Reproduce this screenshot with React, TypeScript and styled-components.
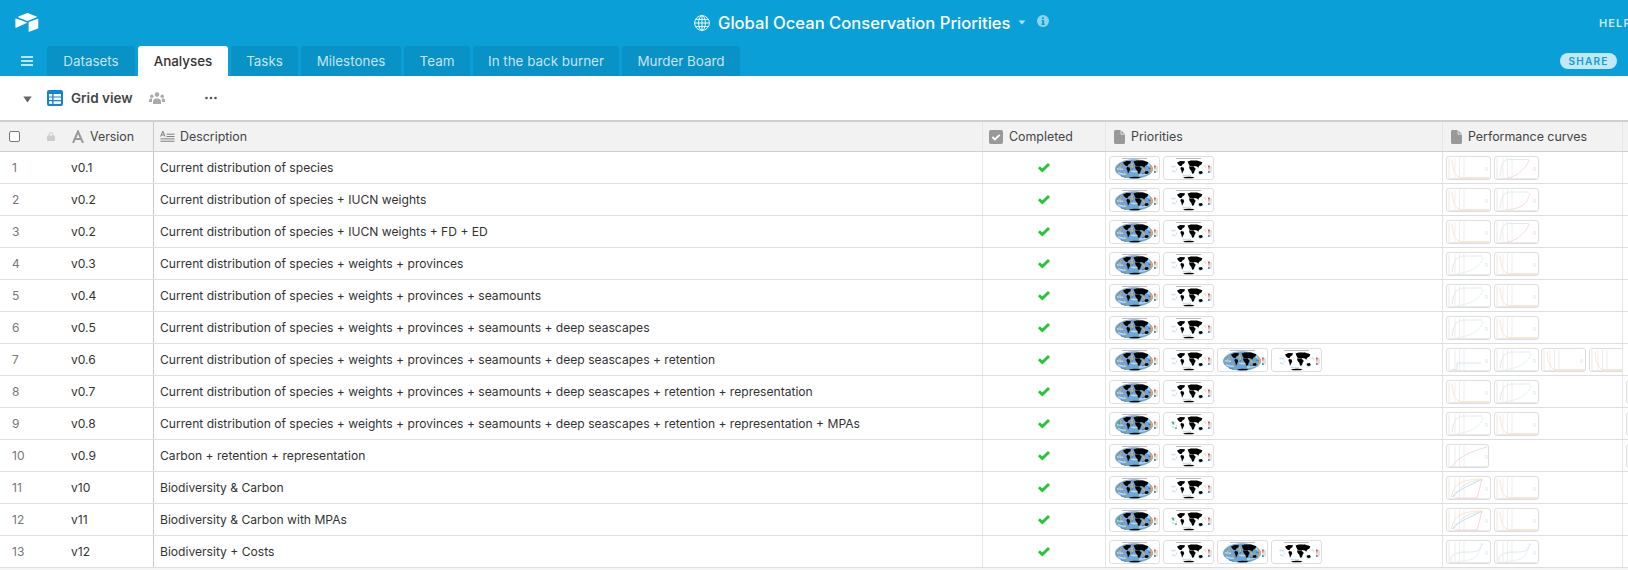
import React from 'react';
import styled, { createGlobalStyle } from 'styled-components';

const GlobalStyle = createGlobalStyle`
  html, body { margin: 0; padding: 0; height: 100%; background: #f5f5f5; }
  #root { height: 100%; }
  * { box-sizing: border-box; }
  body { font-family: Inter, "Liberation Sans", sans-serif; color: #333; }
`;

const Page = styled.div`
  display: flex;
  flex-direction: column;
  width: 1628px;
  height: 570px;
  overflow: hidden;
`;

const Header = styled.header`
  background: #0a9fd6;
  height: 76px;
  flex: none;
`;

const TopBar = styled.div`
  display: grid;
  grid-template-columns: 694px 1fr 29px;
  align-items: center;
  height: 46px;
`;

const Logo = styled.div`
  padding: 0 0 2px 15px;
  display: flex;
`;

const TitleGroup = styled.div`
  display: flex;
  align-items: center;
  margin-top: -1px;
`;

const Title = styled.h1`
  margin: 0 0 0 8px;
  font-size: 16.6px;
  font-weight: 500;
  color: #fff;
  white-space: nowrap;
`;

const Help = styled.div`
  font-size: 11px;
  font-weight: 600;
  letter-spacing: 1.1px;
  color: rgba(255, 255, 255, 0.78);
  white-space: nowrap;
  overflow: hidden;
`;

const TabBar = styled.nav`
  display: flex;
  align-items: flex-end;
  height: 30px;
`;

const MenuButton = styled.div`
  width: 47px;
  height: 30px;
  flex: none;
  display: flex;
  align-items: center;
  padding-left: 21px;
`;

const Tab = styled.div<{ $active?: boolean; $w: number }>`
  height: 30px;
  width: ${({ $w }) => $w}px;
  margin-right: 3px;
  flex: none;
  display: flex;
  align-items: center;
  justify-content: center;
  font-size: 13.4px;
  border-radius: 3px 3px 0 0;
  white-space: nowrap;
  background: ${({ $active }) => ($active ? '#fff' : '#0892c5')};
  color: ${({ $active }) => ($active ? '#333' : 'rgba(255,255,255,0.78)')};
  font-weight: ${({ $active }) => ($active ? 500 : 400)};
`;

const Share = styled.div`
  margin: 0 11px 7px auto;
  width: 57px;
  height: 16px;
  border-radius: 8px;
  background: #c2e8f5;
  color: #0a9fd6;
  font-size: 10px;
  font-weight: 600;
  letter-spacing: 1.2px;
  display: flex;
  align-items: center;
  justify-content: center;
`;

const Toolbar = styled.div`
  display: flex;
  align-items: center;
  height: 44px;
  flex: none;
  background: #fff;
  padding-left: 23px;
`;

const ViewName = styled.span`
  font-size: 13.5px;
  font-weight: 600;
  color: #444;
  margin: 0 16px 0 8px;
`;

const GridRow = styled.div<{ $head?: boolean }>`
  display: flex;
  flex: none;
  height: 32px;
  background: ${({ $head }) => ($head ? '#f2f2f2' : '#fff')};
  border-top: ${({ $head }) => ($head ? '2px solid #cfcfcf' : 'none')};
  border-bottom: 1px solid ${({ $head }) => ($head ? '#cfcfcf' : '#dcdfe0')};
`;

const Cell = styled.div<{ $w: number; $strong?: boolean }>`
  width: ${({ $w }) => $w}px;
  flex: none;
  display: flex;
  align-items: center;
  overflow: hidden;
  border-right: 1px solid ${({ $strong }) => ($strong ? '#c8c8c8' : '#e6e6e6')};
  font-size: 12.1px;
  color: #333;
  white-space: nowrap;
`;

const FrozenInner = styled.div`
  display: grid;
  grid-template-columns: 71px 1fr;
  align-items: center;
  width: 100%;
`;

const HeadFrozen = styled.div`
  display: flex;
  align-items: center;
  padding-left: 9px;
  width: 100%;
`;

const RowNumber = styled.span`
  padding-left: 12px;
  font-size: 12px;
  color: #777;
`;

const TextCell = styled(Cell)`
  padding-left: 6px;
`;

const HeadCell = styled(Cell)<{ $pad?: number }>`
  padding-left: ${({ $pad = 6 }) => $pad}px;
  font-size: 12.4px;
  color: #444;
`;

const HeadLabel = styled.span<{ $gap?: number }>`
  margin-left: ${({ $gap = 6 }) => $gap}px;
`;

const CheckCell = styled(Cell)`
  justify-content: center;
  padding-top: 1px;
`;

const Thumbs = styled.div`
  display: flex;
  gap: 2.6px;
  padding-left: 3px;
  flex: none;
`;

const ThumbFrame = styled.div<{ $w: number }>`
  width: ${({ $w }) => $w}px;
  height: 24px;
  flex: none;
  background: #fff;
  border: 1px solid #dedede;
  border-radius: 3px;
  overflow: hidden;
  display: flex;
  svg {
    filter: blur(0.35px);
  }
`;

const Footer = styled.div`
  flex: 1;
  background: #f5f5f5;
`;

const Logomark = () => (
  <svg width="24" height="21" viewBox="0 0 24 21">
    <path d="M11.8 1.2 3.4 4.6c-.4.2-.4.6 0 .8l8.4 3.3c.5.2 1 .2 1.4 0l8.4-3.4c.4-.2.4-.6 0-.8l-8.4-3.3c-.4-.2-1-.2-1.4 0Z" fill="#fff" />
    <path d="M13.6 10.6v8.7c0 .4.4.6.7.5l8.6-3.3c.3-.1.4-.3.4-.5V7.3c0-.4-.4-.6-.7-.5l-8.6 3.3c-.2.1-.4.3-.4.5Z" fill="#fff" />
    <path d="M11.6 10.9 1.1 15.7c-.3.1-.7-.1-.7-.5V6.9c0-.3.4-.5.7-.4l10.5 3.7c.4.1.4.5 0 .7Z" fill="#fff" />
  </svg>
);

const Globe = () => (
  <svg width="16" height="16" viewBox="0 0 16 16" fill="none" stroke="#fff" strokeWidth=".9">
    <circle cx="8" cy="8" r="7.4" />
    <ellipse cx="8" cy="8" rx="3.4" ry="7.4" />
    <path d="M8 .6v14.8M.6 8h14.8M1.7 4.4h12.6M1.7 11.6h12.6" />
  </svg>
);

const TitleCaret = () => (
  <svg width="8" height="5" viewBox="0 0 8 5" style={{ marginLeft: 7 }}>
    <path d="M.6.5h6.8L4 4.4Z" fill="rgba(255,255,255,.7)" />
  </svg>
);

const InfoIcon = () => (
  <svg width="12" height="12" viewBox="0 0 12 12" style={{ marginLeft: 11, marginTop: -3 }}>
    <circle cx="6" cy="6" r="6" fill="rgba(255,255,255,.55)" />
    <path d="M5 2.2h2v1.7H5ZM4.6 5h2.5v3.6h.7V10H4.4V8.6h.8V6.3h-.6Z" fill="#0a9fd6" />
  </svg>
);

const MenuIcon = () => (
  <svg width="12" height="10" viewBox="0 0 12 10" fill="#fff" opacity=".9">
    <rect width="12" height="1.6" y=".2" />
    <rect width="12" height="1.6" y="4.2" />
    <rect width="12" height="1.6" y="8.2" />
  </svg>
);

const ViewCaret = () => (
  <svg width="9" height="7" viewBox="0 0 9 7" style={{ marginRight: 15, marginTop: 2 }}>
    <path d="M.3.6h8.4L4.5 6.4Z" fill="#666" />
  </svg>
);

const GridIcon = () => (
  <svg width="16" height="16" viewBox="0 0 16 16">
    <rect width="16" height="16" rx="2" fill="#1283da" />
    <path d="M2 4h3.2v2.4H2ZM6.6 4H14v2.4H6.6ZM2 7.6h3.2V10H2ZM6.6 7.6H14V10H6.6ZM2 11.2h3.2V14H3a1 1 0 0 1-1-1ZM6.6 11.2H14V13a1 1 0 0 1-1 1H6.6Z" fill="#fff" />
  </svg>
);

const PeopleIcon = () => (
  <svg width="16" height="13" viewBox="0 0 16 13" fill="#aaa" style={{ marginTop: 1 }}>
    <circle cx="8" cy="2.6" r="2.3" />
    <circle cx="2.8" cy="4.3" r="1.7" />
    <circle cx="13.2" cy="4.3" r="1.7" />
    <path d="M4 12v-3a3 3 0 0 1 3-2.5h2A3 3 0 0 1 12 9v3ZM0 10V8.4C0 7.2 1 6.6 2 6.6h1.4C3 7.4 3 8 3 9v1ZM16 10V8.4c0-1.2-1-1.8-2-1.8h-1.4c.4.8.4 1.4.4 2.4v1Z" />
  </svg>
);

const DotsIcon = () => (
  <svg width="12" height="4" viewBox="0 0 12 4" fill="#555" style={{ marginLeft: 40 }}>
    <circle cx="1.5" cy="2" r="1.3" />
    <circle cx="6" cy="2" r="1.3" />
    <circle cx="10.5" cy="2" r="1.3" />
  </svg>
);

const HeadCheckbox = () => (
  <svg width="11" height="11" viewBox="0 0 11 11">
    <rect x=".5" y=".5" width="10" height="10" rx="1.5" fill="#fff" stroke="#777" />
  </svg>
);

const LockIcon = () => (
  <svg width="8" height="9" viewBox="0 0 8 9" style={{ marginLeft: 27, marginRight: 17 }}>
    <path d="M2 4V2.6a2 2 0 0 1 4 0V4" fill="none" stroke="#ccc" />
    <rect y="3.6" width="8" height="5.4" rx="1" fill="#ccc" />
  </svg>
);

const TextIcon = () => (
  <svg width="12" height="13" viewBox="0 0 12 13" fill="none" stroke="#999" strokeWidth="2">
    <path d="M1 13 6 1.5 11 13M2.8 9h6.4" />
  </svg>
);

const LongTextIcon = () => (
  <svg width="15" height="14" viewBox="0 0 16 14" fill="none" stroke="#777">
    <path d="M.7 6.5 3 .8l2.3 5.7M1.5 4.8h3" strokeWidth="1" />
    <path d="M7 4h8.5M7 6.5h8.5M.5 9h15M.5 11.5h15" strokeWidth="1" />
  </svg>
);

const CheckboxIcon = () => (
  <svg width="14" height="14" viewBox="0 0 14 14">
    <rect width="14" height="14" rx="2" fill="#999" />
    <path d="m3.4 7 2.5 2.5 4.8-4.6" fill="none" stroke="#fff" strokeWidth="1.9" />
  </svg>
);

const FileIcon = () => (
  <svg width="11" height="14" viewBox="0 0 11 14">
    <path d="M1.5 0h5.2L11 4.3v8.2c0 .8-.7 1.5-1.5 1.5h-8C.7 14 0 13.3 0 12.5v-11C0 .7.7 0 1.5 0Z" fill="#999" />
    <path d="M7 0v4.2h4" fill="none" stroke="#f2f2f2" strokeWidth=".8" />
  </svg>
);

const GreenCheck = () => (
  <svg width="12" height="10" viewBox="0 0 12 10">
    <path d="M0 5.2 1.9 3.3 4.3 5.6 10 0l2 1.9-7.7 7.6Z" fill="#20c933" />
  </svg>
);

type MapTone = 'blue' | 'pale' | 'blueGreen' | 'paleGreen';

const LAND =
  'M14 6.6 17.5 5l4.5.3-.6 1.9-2 1.3-1 1.8-1.8-.5-1.4-1.4ZM18 11l2.6.5.6 1.9-1.3 2.6-.9 1.8-.6-3-1-2.4ZM24.6 5.6l3-1.2 6.4.2 5.4 1.6-1 2.2-2.2 1.4-1 2-1.2-1.2-3-.7-4.2.2-1-1.6ZM26 10.4l4.6-.2 1 1.6 1.2.9-1.2 2.3-.7 2.3-1.8.5-.7-2.7-1.8-2ZM35.8 15.6l3-.5 1 1.8-1.7 1-2.3-.4ZM20 21.2l5.5-.5 6 .3-1.8 1.2-8 .1Z';

const MapThumb = ({ tone }: { tone: MapTone }) => {
  const blue = tone === 'blue' || tone === 'blueGreen';
  const green = tone === 'blueGreen' || tone === 'paleGreen';
  return (
    <ThumbFrame $w={51.4}>
      <svg width="49.4" height="22" viewBox="1 1 49.4 22">
        <rect x="13" y="2" width="25" height=".8" fill="#aaa" />
        {blue ? (
          <>
            <ellipse cx="25" cy="13" rx="19" ry="9.7" fill="#6fa6d2" />
            <path d="M8 13c2-1 4 1 6 0M9 17c3 0 5 2 8 1M22 15c3 1 5 0 8 1M34 7c2 1 5 1 7 3M30 19c3 0 6 0 9-2" fill="none" stroke="#b8d6ea" strokeWidth="1.6" />
            <path d="M10 9c1 1 2 1 3 0M12 20l5 1.5M24 9.5l-1 5M33 18l4-1M39 12l3 1" fill="none" stroke="#3f7db6" strokeWidth=".9" />
            <path d="M41.5 9.5c1.5 2 1.5 5-.5 7.5M12.5 9c-1.2 1-2 2.5-2 4M22.5 7l1 5M33.5 12.5l2.5 2.5M15 17l2 1" fill="none" stroke="#f0a850" strokeWidth="1.3" />
          </>
        ) : (
          <path d="M8.5 10c1 1 3 1 4 0M9 15l3.5 1M36 19l4-1.5M41 9l2 3M20 19.5l8 .5M13 13l1 1" fill="none" stroke="#c5e2f2" strokeWidth="1.3" />
        )}
        {green && <path d="M9.5 9.5l1.2 3M12.5 15.5l1 1.2" fill="none" stroke="#3fae58" strokeWidth="1.6" />}
        <path d={LAND} fill="#000" />
        <rect x="45" y="9.5" width="1.8" height="2.2" fill="#e5533d" />
        <rect x="45" y="11.7" width="1.8" height="1.8" fill="#f2b366" />
        <rect x="45" y="13.5" width="1.8" height="1.6" fill="#cfe6f2" />
        <rect x="45" y="15.1" width="1.8" height="1.8" fill="#4a86c0" />
        <rect x="47" y="10" width="2" height="6.5" fill="#e2e2e2" />
      </svg>
    </ThumbFrame>
  );
};

type CurveKind = 'decay' | 'rise' | 'rise2' | 'late' | 'flat' | 'wide' | 'log' | 'multi' | 'scurve';

const CURVES: Record<CurveKind, { d: string; color: string }[]> = {
  decay: [{ d: 'M5 2C6 12 7 19 13 20.5H44', color: '#fbe3c6' }],
  rise: [
    { d: 'M5 20C6 8 8 3 13 2.5H34', color: '#dbe9f1' },
    { d: 'M12 21C20 20 30 14 34 3', color: '#f8d8d5' },
  ],
  rise2: [
    { d: 'M5 20C6 8 8 4 14 3H34', color: '#dbe9f1' },
    { d: 'M10 21C22 20 32 18 35 4', color: '#f8d8d5' },
  ],
  late: [
    { d: 'M5 20C6 9 9 4 16 3H35', color: '#dbe9f1' },
    { d: 'M8 21C22 20 34 14 36 4', color: '#e3eff5' },
  ],
  flat: [{ d: 'M5 2C6 12 7 19 13 20.5H44', color: '#fbe3c6' }],
  wide: [{ d: 'M5 20.5H10V14H34', color: '#d2e4ed' }],
  log: [{ d: 'M5 21C12 12 22 7 40 2', color: '#f3d3d6' }],
  multi: [
    { d: 'M4 20C8 6 14 3 34 2', color: '#fbe3c6' },
    { d: 'M5 20C12 12 24 8 35 2', color: '#c3d4dd' },
    { d: 'M9 21H30C32 16 33 8 35 2', color: '#f3d0d3' },
    { d: 'M6 20C14 8 22 4 34 3', color: '#d8e7ef' },
  ],
  scurve: [
    { d: 'M4 21V16C8 12 12 11 20 11C28 11 33 11 35 2', color: '#d8e8f0' },
    { d: 'M6 21C14 20 26 20 30 15C32 11 34 6 36 3', color: '#e7f0f5' },
  ],
};

const ChartThumb = ({ kind, width = 45 }: { kind: CurveKind; width?: number }) => (
  <ThumbFrame $w={width}>
    <svg width={width - 2} height="22" viewBox={`0 0 ${width - 2} 22`}>
      <path d="M2 1v20.5H42" fill="none" stroke="#e0e0e0" strokeWidth=".7" />
      <path d="M8 1v20M12.5 1v20M17 1v20" fill="none" stroke="#e6e6e6" strokeWidth=".7" />
      {CURVES[kind].map((c, i) => (
        <path key={i} d={c.d} fill="none" stroke={c.color} strokeWidth=".9" />
      ))}
      <path d="M38 11h3M38 13h3" stroke="#dcdcdc" strokeWidth=".7" />
    </svg>
  </ThumbFrame>
);

type Row = {
  version: string;
  description: string;
  maps: MapTone[];
  charts: CurveKind[];
  chartWidth?: number;
  extra?: boolean;
};

const BASE = 'Current distribution of species';
const W = `${BASE} + weights + provinces`;

const rows: Row[] = [
  { version: 'v0.1', description: BASE, maps: ['blue', 'pale'], charts: ['decay', 'rise'] },
  { version: 'v0.2', description: `${BASE} + IUCN weights`, maps: ['blue', 'pale'], charts: ['decay', 'rise2'] },
  { version: 'v0.2', description: `${BASE} + IUCN weights + FD + ED`, maps: ['blue', 'pale'], charts: ['decay', 'rise'] },
  { version: 'v0.3', description: W, maps: ['blue', 'pale'], charts: ['late', 'flat'] },
  { version: 'v0.4', description: `${W} + seamounts`, maps: ['blue', 'pale'], charts: ['late', 'flat'] },
  { version: 'v0.5', description: `${W} + seamounts + deep seascapes`, maps: ['blue', 'pale'], charts: ['late', 'flat'] },
  { version: 'v0.6', description: `${W} + seamounts + deep seascapes + retention`, maps: ['blue', 'pale', 'blue', 'pale'], charts: ['wide', 'late', 'decay', 'decay'] },
  { version: 'v0.7', description: `${W} + seamounts + deep seascapes + retention + representation`, maps: ['blue', 'pale'], charts: ['decay', 'late'], extra: true },
  { version: 'v0.8', description: `${W} + seamounts + deep seascapes + retention + representation + MPAs`, maps: ['blueGreen', 'paleGreen'], charts: ['late', 'decay'], extra: true },
  { version: 'v0.9', description: 'Carbon + retention + representation', maps: ['blue', 'pale'], charts: ['log'], chartWidth: 43, extra: true },
  { version: 'v10', description: 'Biodiversity & Carbon', maps: ['blue', 'pale'], charts: ['multi', 'decay'] },
  { version: 'v11', description: 'Biodiversity & Carbon with MPAs', maps: ['blueGreen', 'paleGreen'], charts: ['multi', 'decay'] },
  { version: 'v12', description: 'Biodiversity + Costs', maps: ['blue', 'pale', 'blue', 'pale'], charts: ['scurve', 'scurve'] },
];

const tabs = [
  { name: 'Datasets', w: 88 },
  { name: 'Analyses', w: 90, active: true },
  { name: 'Tasks', w: 67 },
  { name: 'Milestones', w: 100 },
  { name: 'Team', w: 66 },
  { name: 'In the back burner', w: 146 },
  { name: 'Murder Board', w: 118 },
];

const COL = { frozen: 154, description: 829, completed: 123, priorities: 337, curves: 180, next: 40 };

export default function App() {
  return (
    <Page>
      <GlobalStyle />
      <Header>
        <TopBar>
          <Logo><Logomark /></Logo>
          <TitleGroup>
            <Globe />
            <Title>Global Ocean Conservation Priorities</Title>
            <TitleCaret />
            <InfoIcon />
          </TitleGroup>
          <Help>HELP</Help>
        </TopBar>
        <TabBar>
          <MenuButton><MenuIcon /></MenuButton>
          {tabs.map(t => (
            <Tab key={t.name} $active={t.active} $w={t.w}>{t.name}</Tab>
          ))}
          <Share>SHARE</Share>
        </TabBar>
      </Header>
      <Toolbar>
        <ViewCaret />
        <GridIcon />
        <ViewName>Grid view</ViewName>
        <PeopleIcon />
        <DotsIcon />
      </Toolbar>
      <GridRow $head>
        <HeadCell $w={COL.frozen} $strong $pad={0}>
          <HeadFrozen>
            <HeadCheckbox />
            <LockIcon />
            <TextIcon />
            <HeadLabel>Version</HeadLabel>
          </HeadFrozen>
        </HeadCell>
        <HeadCell $w={COL.description}><LongTextIcon /><HeadLabel $gap={5}>Description</HeadLabel></HeadCell>
        <HeadCell $w={COL.completed}><CheckboxIcon /><HeadLabel>Completed</HeadLabel></HeadCell>
        <HeadCell $w={COL.priorities} $pad={8}><FileIcon /><HeadLabel>Priorities</HeadLabel></HeadCell>
        <HeadCell $w={COL.curves} $pad={8}><FileIcon /><HeadLabel>Performance curves</HeadLabel></HeadCell>
        <HeadCell $w={COL.next} />
      </GridRow>
      {rows.map((r, i) => (
        <GridRow key={i}>
          <Cell $w={COL.frozen} $strong>
            <FrozenInner>
              <RowNumber>{i + 1}</RowNumber>
              <span>{r.version}</span>
            </FrozenInner>
          </Cell>
          <TextCell $w={COL.description}>{r.description}</TextCell>
          <CheckCell $w={COL.completed}><GreenCheck /></CheckCell>
          <Cell $w={COL.priorities}>
            <Thumbs>{r.maps.map((m, j) => <MapThumb key={j} tone={m} />)}</Thumbs>
          </Cell>
          <Cell $w={COL.curves}>
            <Thumbs>{r.charts.map((c, j) => <ChartThumb key={j} kind={c} width={r.chartWidth} />)}</Thumbs>
          </Cell>
          <Cell $w={COL.next}>
            {r.extra && <Thumbs><ChartThumb kind="decay" /></Thumbs>}
          </Cell>
        </GridRow>
      ))}
      <Footer />
    </Page>
  );
}
